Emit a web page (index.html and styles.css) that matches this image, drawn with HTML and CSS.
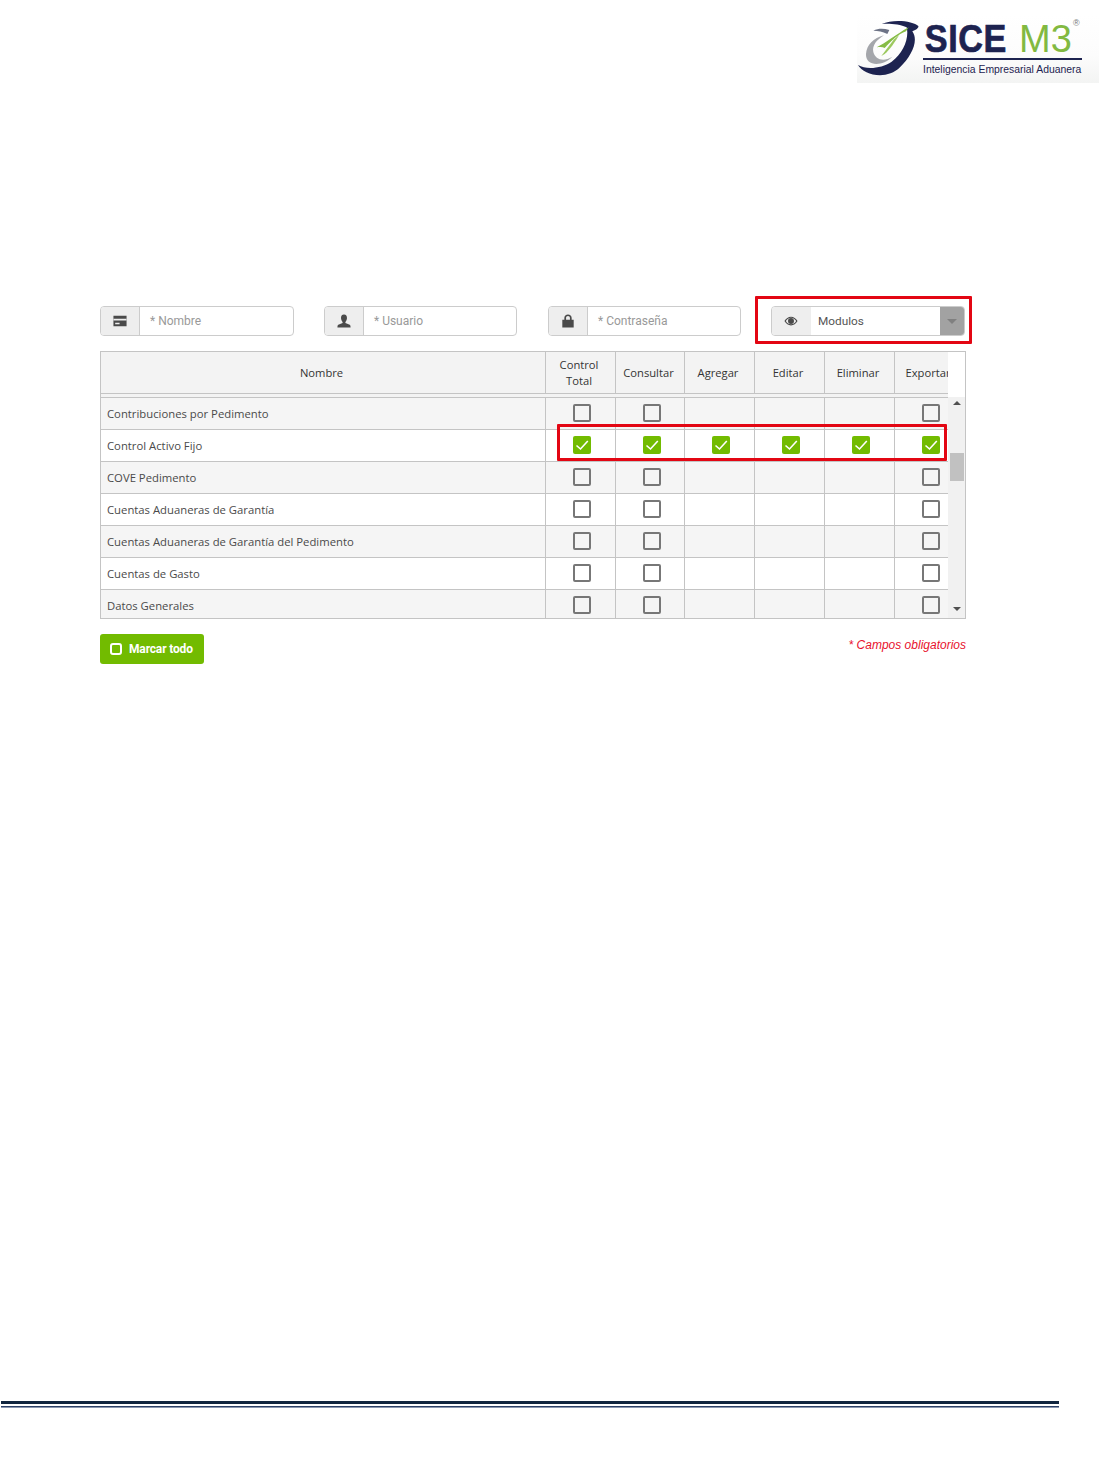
FILE: index.html
```html
<!DOCTYPE html>
<html lang="es">
<head>
<meta charset="utf-8">
<title>SICE M3 - Permisos</title>
<link rel="stylesheet" href="styles.css">
</head>
<body>
<header class="top">
  <div class="logo">
    <svg class="logo-mark" viewBox="21 15 192 192" aria-hidden="true">
      <path d="M24 165C40 195 110 212 150 172C185 137 207 92 187 64C197 60 207 54 205 48C190 33 130 26 95 42C115 40 150 42 170 52C178 85 160 130 125 155C95 175 50 180 24 165Z" fill="#1d2350"/>
      <path d="M48 132C46 168 95 172 127 140C102 156 76 150 70 126C66 106 80 90 102 76C70 84 50 105 48 132Z" fill="#a4a6ab"/>
      <path d="M70 62C85 55 100 55 118 60L112 72C98 64 84 62 70 62Z" fill="#6d7386"/>
      <path d="M80 112C105 100 140 72 176 52L168 64C145 72 122 94 104 114C98 110 90 110 80 112Z" fill="#86bc45"/>
      <path d="M94 138L132 88L148 74C136 94 120 118 104 132Z" fill="#9cc95f"/>
    </svg>
    <div class="logo-words">
      <div class="logo-name"><span class="logo-sice">SICE</span><span class="logo-m3">M3</span><span class="logo-reg">®</span></div>
      <div class="logo-rule"></div>
      <div class="logo-tag">Inteligencia Empresarial Aduanera</div>
    </div>
  </div>
</header>

<main class="panel">
  <div class="fields">
    <div class="field f-name">
      <span class="addon">
        <svg class="ico" viewBox="0 0 16 16" aria-hidden="true"><path d="M0.500 2h15v12h-15z" fill="#4a4a4a"/><path d="M0.500 5.400h15v2h-15z" fill="#eee"/><path d="M2.500 10h5v1.600h-5z" fill="#eee"/></svg>
      </span>
      <span class="value ph">* Nombre</span>
    </div>
    <div class="field f-user">
      <span class="addon">
        <svg class="ico" viewBox="0 0 16 16" aria-hidden="true"><path d="M8 0.500C5.600 0.500 4.400 2.400 4.600 4.900C4.700 6.600 5.400 8.100 6.400 9V10.300L1.500 12.400C0.800 12.800 0.500 13.700 0.500 15.500H15.500C15.500 13.700 15.200 12.800 14.500 12.400L9.600 10.300V9C10.600 8.100 11.300 6.600 11.400 4.900C11.600 2.400 10.400 0.500 8 0.500Z" fill="#4a4a4a"/></svg>
      </span>
      <span class="value ph">* Usuario</span>
    </div>
    <div class="field f-pass">
      <span class="addon">
        <svg class="ico" viewBox="0 0 16 16" aria-hidden="true"><path fill-rule="evenodd" d="M3.800 6.500V4.600C3.800 2 5.600 0.500 8 0.500S12.200 2 12.200 4.600V6.500H14.500V15.500H1.500V6.500ZM5.800 6.500H10.200V4.600C10.200 3.200 9.300 2.400 8 2.400S5.800 3.200 5.800 4.600Z" fill="#4a4a4a"/></svg>
      </span>
      <span class="value ph">* Contraseña</span>
    </div>
    <div class="field f-select">
      <span class="addon">
        <svg class="ico" viewBox="0 0 16 16" aria-hidden="true"><path fill-rule="evenodd" d="M0.500 8C2.300 4.800 5 3 8 3S13.700 4.800 15.500 8C13.700 11.200 11 13 8 13S2.300 11.200 0.500 8ZM8 4.200C5.600 4.200 3.500 5.600 2.100 8C3.500 10.400 5.600 11.800 8 11.800S12.500 10.400 13.900 8C12.500 5.600 10.400 4.200 8 4.200Z" fill="#4a4a4a"/><circle cx="8" cy="8" r="3.400" fill="#4a4a4a"/></svg>
      </span>
      <span class="value">Modulos</span>
      <span class="arrow"><span class="arrow-tri"></span></span>
    </div>
  </div>

  <div class="grid">
    <div class="head-wrap">
      <table class="cols head">
        <colgroup><col class="c-name"><col class="c-a"><col class="c-b"><col class="c-c"><col class="c-c"><col class="c-c"><col class="c-c"></colgroup>
        <tr><th>Nombre</th><th>Control<br>Total</th><th>Consultar</th><th>Agregar</th><th>Editar</th><th>Eliminar</th><th>Exportar</th></tr>
      </table>
    </div>
    <div class="body">
      <div class="gap"></div>
      <table class="cols rows">
        <colgroup><col class="c-name"><col class="c-a"><col class="c-b"><col class="c-c"><col class="c-c"><col class="c-c"><col class="c-c"></colgroup>
        <tr class="alt"><td class="n">Contribuciones por Pedimento</td><td><i class="cb"></i></td><td><i class="cb"></i></td><td></td><td></td><td></td><td><i class="cb"></i></td></tr>
        <tr><td class="n">Control Activo Fijo</td>
          <td><i class="cb on"><svg viewBox="0 0 18 18" aria-hidden="true"><path d="M3.500 9.500L7.500 13L14.800 5" fill="none" stroke="#fff" stroke-width="1.600"/></svg></i></td>
          <td><i class="cb on"><svg viewBox="0 0 18 18" aria-hidden="true"><path d="M3.500 9.500L7.500 13L14.800 5" fill="none" stroke="#fff" stroke-width="1.600"/></svg></i></td>
          <td><i class="cb on"><svg viewBox="0 0 18 18" aria-hidden="true"><path d="M3.500 9.500L7.500 13L14.800 5" fill="none" stroke="#fff" stroke-width="1.600"/></svg></i></td>
          <td><i class="cb on"><svg viewBox="0 0 18 18" aria-hidden="true"><path d="M3.500 9.500L7.500 13L14.800 5" fill="none" stroke="#fff" stroke-width="1.600"/></svg></i></td>
          <td><i class="cb on"><svg viewBox="0 0 18 18" aria-hidden="true"><path d="M3.500 9.500L7.500 13L14.800 5" fill="none" stroke="#fff" stroke-width="1.600"/></svg></i></td>
          <td><i class="cb on"><svg viewBox="0 0 18 18" aria-hidden="true"><path d="M3.500 9.500L7.500 13L14.800 5" fill="none" stroke="#fff" stroke-width="1.600"/></svg></i></td>
        </tr>
        <tr class="alt"><td class="n">COVE Pedimento</td><td><i class="cb"></i></td><td><i class="cb"></i></td><td></td><td></td><td></td><td><i class="cb"></i></td></tr>
        <tr><td class="n">Cuentas Aduaneras de Garantía</td><td><i class="cb"></i></td><td><i class="cb"></i></td><td></td><td></td><td></td><td><i class="cb"></i></td></tr>
        <tr class="alt"><td class="n">Cuentas Aduaneras de Garantía del Pedimento</td><td><i class="cb"></i></td><td><i class="cb"></i></td><td></td><td></td><td></td><td><i class="cb"></i></td></tr>
        <tr><td class="n">Cuentas de Gasto</td><td><i class="cb"></i></td><td><i class="cb"></i></td><td></td><td></td><td></td><td><i class="cb"></i></td></tr>
        <tr class="alt"><td class="n">Datos Generales</td><td><i class="cb"></i></td><td><i class="cb"></i></td><td></td><td></td><td></td><td><i class="cb"></i></td></tr>
      </table>
      <div class="scrollbar">
        <span class="sb-up"></span>
        <span class="sb-thumb"></span>
        <span class="sb-down"></span>
      </div>
    </div>
  </div>

  <div class="actions">
    <button class="btn" type="button"><span class="btn-box"></span>Marcar todo</button>
    <span class="req">* Campos obligatorios</span>
  </div>

  <div class="mark mark-select"></div>
  <div class="mark mark-row"></div>
</main>

<footer class="foot">
  <div class="foot-thick"></div>
  <div class="foot-thin"></div>
</footer>
</body>
</html>
```
FILE: styles.css
```css
* { box-sizing: border-box; }
html, body { margin: 0; padding: 0; background: #fff; }
body { width: 1099px; height: 1460px; position: relative; overflow: hidden; font-family: "Open Sans", "Liberation Sans", sans-serif; }

.top { display: flex; justify-content: flex-end; height: 83px; padding-top: 15px; }
.logo { width: 242px; height: 68px; background: linear-gradient(#fff 0, #fcfcfc 60%, #f3f4f3 100%); display: flex; }
.logo-mark { width: 64px; height: 64px; flex: none; }
.logo-words { margin-left: 2px; width: 176px; padding-top: 6px; }
.logo-name { font-family: "Liberation Sans", sans-serif; font-size: 38px; line-height: 36px; height: 36px; white-space: nowrap; position: relative; display: flex; }
.logo-sice { display: block; width: 96px; padding-left: 2px; font-weight: 700; color: #1d2350; transform: scaleX(.9); transform-origin: left center; letter-spacing: 0.600px; -webkit-text-stroke: 0.700px #1d2350; }
.logo-m3 { display: block; width: 55px; color: #82b941; }
.logo-reg { position: absolute; left: 150px; top: -3px; font-size: 9px; line-height: 10px; color: #777; }
.logo-rule { height: 2px; background: #1d2350; margin-top: 1px; width: 159px; }
.logo-tag { font-family: "Liberation Sans", sans-serif; font-size: 10.400px; line-height: 12px; margin-top: 4px; color: #1d2350; white-space: nowrap; }

.panel { position: relative; padding: 223px 0 0 100px; }
.fields { display: flex; }
.field { height: 30px; display: flex; border: 1px solid #ccc; border-radius: 4px; font-family: Roboto, "Liberation Sans", sans-serif; font-size: 12px; overflow: hidden; background: #fff; }
.f-name { width: 194px; margin-right: 30px; }
.f-user { width: 193px; margin-right: 31px; }
.f-pass { width: 193px; margin-right: 30px; }
.f-select { width: 194px; }
.addon { width: 39px; flex: none; background: #eee; border-right: 1px solid #ccc; display: flex; align-items: center; justify-content: center; padding-right: 1px; }
.ico { width: 14px; height: 14px; display: block; }
.value { flex: 1; padding-left: 10px; line-height: 28px; color: #555; }
.value.ph { color: #999; }
.f-select .addon { border-right: 0; }
.f-select .value { padding-left: 7px; font-size: 11.800px; }
.arrow { width: 24px; flex: none; background: #a2a2a2; display: flex; align-items: center; justify-content: center; }
.arrow-tri { width: 0; height: 0; border: 5px solid transparent; border-top: 5px solid #808080; border-bottom: 0; }

.grid { width: 866px; height: 268px; margin-top: 15px; border: 1px solid #c4c4c4; display: flex; flex-direction: column; overflow: hidden; background: #fff; }
.cols { border-collapse: separate; border-spacing: 0; table-layout: fixed; width: 863px; color: #444; }
.c-name { width: 444px; }
.c-a { width: 70px; }
.c-b { width: 69px; }
.c-c { width: 70px; }
.head-wrap { width: 847px; height: 42px; flex: none; overflow: hidden; }
.head th { height: 42px; font-weight: 400; font-size: 11.200px; padding: 0 3px 0 0; background: #f3f3f3; border-bottom: 1px solid #c4c4c4; border-left: 1px solid #c4c4c4; line-height: 16px; color: #333; white-space: nowrap; overflow: hidden; }
.head th:first-child { border-left: 0; }
.body { position: relative; flex: 1; overflow: hidden; min-height: 0; }
.gap { width: 847px; height: 3px; background: #f3f3f3; }
.rows { border-top: 1px solid #c4c4c4; background: #fff; font-size: 11.300px; }
.rows td { height: 32px; padding: 0; text-align: center; border-left: 1px solid #c4c4c4; border-bottom: 1px solid #c4c4c4; vertical-align: middle; }
.rows td.n { text-align: left; border-left: 0; padding-left: 6px; padding-bottom: 1px; white-space: nowrap; color: #4a4a4a; }
.rows tr.alt td { background: #f5f5f5; }
.cb { display: inline-block; width: 18px; height: 18px; border: 2px solid #777; border-radius: 2px; vertical-align: middle; background: #fff; margin: -2px 0 0 3px; }
.rows tr.alt .cb { background: #f5f5f5; }
.rows tr .cb.on { border: 0; background: #72bb00; }
.cb svg { display: block; width: 18px; height: 18px; }

.scrollbar { position: absolute; left: 847px; top: 3px; bottom: 0; width: 17px; background: #f1f1f1; }
.sb-up, .sb-down { position: absolute; left: 5px; width: 0; height: 0; border: 4px solid transparent; }
.sb-up { top: 4px; border-bottom: 4px solid #505050; border-top: 0; }
.sb-down { bottom: 7px; border-top: 4px solid #505050; border-bottom: 0; }
.sb-thumb { position: absolute; left: 2px; top: 56px; width: 14px; height: 28px; background: #c1c1c1; }

.actions { width: 866px; margin-top: 15px; display: flex; justify-content: space-between; align-items: flex-start; }
.btn { width: 104px; height: 30px; border: 0; border-radius: 3px; background: #72bb00; color: #fff; font: 700 12px Roboto, "Liberation Sans", sans-serif; letter-spacing: -0.150px; display: flex; align-items: center; padding: 0 0 0 10px; }
.btn-box { width: 12px; height: 12px; border: 2.500px solid #fff; border-radius: 3px; margin-right: 7px; flex: none; }
.req { font: italic 12px "Liberation Sans", sans-serif; color: #e8112d; margin-top: 4px; }

.mark { position: absolute; border: 3px solid #e30613; border-radius: 1px; pointer-events: none; }
.mark-select { left: 755px; top: 213px; width: 217px; height: 48px; }
.mark-row { left: 557px; top: 341px; width: 390px; height: 37px; }

.foot { position: absolute; left: 1px; top: 1401px; width: 1058px; }
.foot-thick { height: 3px; background: #10253f; }
.foot-thin { height: 2px; margin-top: 2px; background: linear-gradient(#2c4066 50%, #8a97b0 50%); }
```
